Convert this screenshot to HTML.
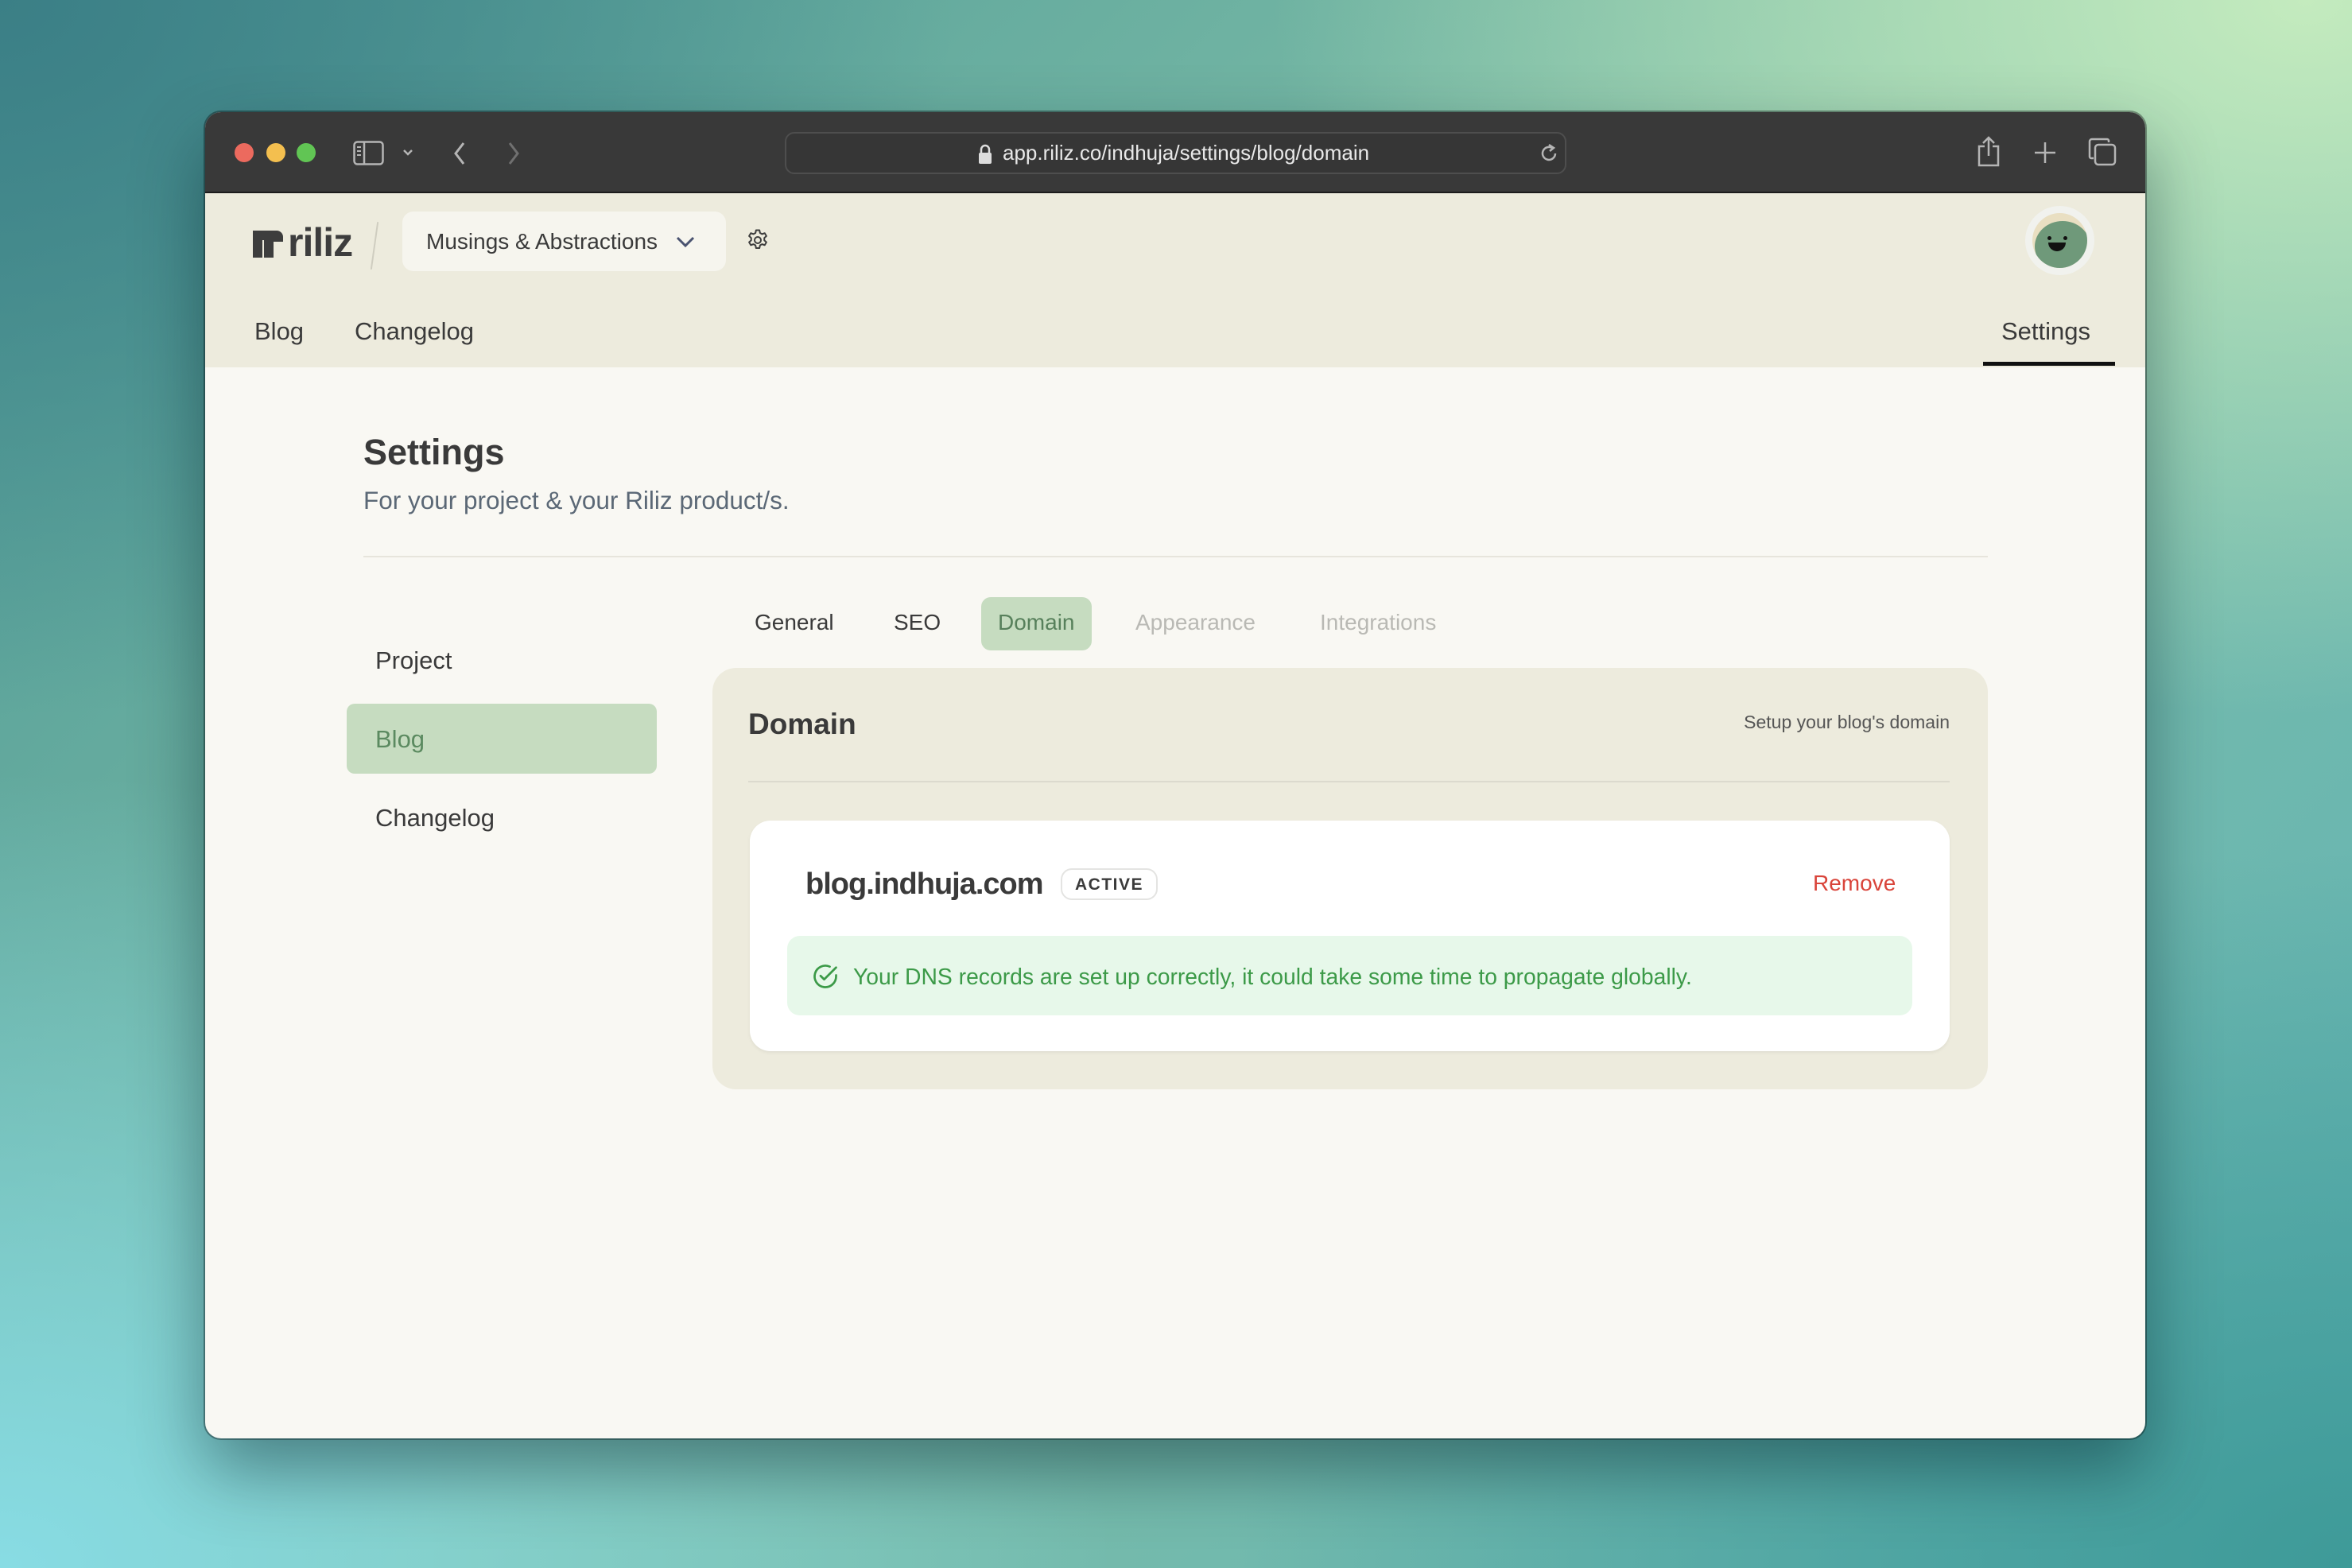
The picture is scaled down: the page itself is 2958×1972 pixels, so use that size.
<!DOCTYPE html>
<html><head><meta charset="utf-8"><style>
*{margin:0;padding:0;box-sizing:border-box}
html,body{width:2958px;height:1972px;overflow:hidden}
body{font-family:"Liberation Sans",sans-serif;position:relative;
background:
radial-gradient(ellipse 1300px 900px at 2900px 0px,#c4ebbe 0%,rgba(180,225,175,0) 100%),
radial-gradient(ellipse 1400px 1000px at 0px 1972px,#88dce4 0%,rgba(136,220,228,0) 100%),
radial-gradient(ellipse 1400px 900px at 2958px 1972px,#3e9a98 0%,rgba(62,154,152,0) 100%),
radial-gradient(ellipse 1200px 900px at 0px 0px,#3b7f86 0%,rgba(59,127,134,0) 100%),
linear-gradient(135deg,#4f9a96 0%,#7fbfa8 50%,#60b2b4 100%);}
.abs{position:absolute}
.win{left:258px;top:141px;width:2440px;height:1668px;border-radius:20px;overflow:hidden;background:#f9f8f3;box-shadow:0 40px 90px rgba(0,30,40,.45),0 0 0 2px rgba(0,0,0,.35)}
.tb{left:0;top:0;width:2440px;height:102px;background:#393939;border-bottom:2px solid #1c1c1c}
.dot{width:24px;height:24px;border-radius:50%;top:39px}
.hdr{left:0;top:102px;width:2440px;height:219px;background:#edebdd}
.t{position:absolute;white-space:nowrap;line-height:1}
</style></head><body>
<div class="abs win">
 <div class="abs tb">
  <div class="abs dot" style="left:37px;background:#ec6a5e"></div>
  <div class="abs dot" style="left:77px;background:#f4bf4f"></div>
  <div class="abs dot" style="left:115px;background:#61c554"></div>
  <svg class="abs" style="left:186px;top:36px" width="40" height="32" viewBox="0 0 40 32"><rect x="1.5" y="1.5" width="36" height="28" rx="4" fill="none" stroke="#b5b5b5" stroke-width="2.5"/><line x1="14" y1="2" x2="14" y2="30" stroke="#b5b5b5" stroke-width="2.5"/><path d="M5 8h5M5 13h5M5 18h5" stroke="#b5b5b5" stroke-width="2"/></svg>
  <svg class="abs" style="left:247px;top:44px" width="16" height="14" viewBox="0 0 16 14"><path d="M3 4l5 5 5-5" fill="none" stroke="#b5b5b5" stroke-width="2.5"/></svg>
  <svg class="abs" style="left:310px;top:36px" width="20" height="32" viewBox="0 0 20 32"><path d="M15 3L5 16l10 13" fill="none" stroke="#b5b5b5" stroke-width="3"/></svg>
  <svg class="abs" style="left:378px;top:36px" width="20" height="32" viewBox="0 0 20 32"><path d="M5 3l10 13L5 29" fill="none" stroke="#707070" stroke-width="3"/></svg>
  <div class="abs" style="left:729px;top:25px;width:983px;height:53px;border:2px solid #4e4e4e;border-radius:12px;background:#363636"></div>
  <svg class="abs" style="left:972px;top:40px" width="18" height="26" viewBox="0 0 18 26"><path d="M4 11V7a5 5 0 0110 0v4" fill="none" stroke="#ddd" stroke-width="2.5"/><rect x="1" y="11" width="16" height="14" rx="2" fill="#ddd"/></svg>
  <div class="t" style="left:1003px;top:38px;font-size:26px;color:#e8e8e8">app.riliz.co/indhuja/settings/blog/domain</div>
  <svg class="abs" style="left:1676px;top:38px" width="28" height="28" viewBox="0 0 28 28"><path d="M22 14a8 8 0 11-3-6.3" fill="none" stroke="#b5b5b5" stroke-width="2.5"/><path d="M14 3l6 4-5 4" fill="none" stroke="#b5b5b5" stroke-width="2.5"/></svg>
  <svg class="abs" style="left:2227px;top:29px" width="32" height="40" viewBox="0 0 32 40"><path d="M11 14H4v24h24V14h-7M16 26V3M9 10l7-7 7 7" fill="none" stroke="#b5b5b5" stroke-width="2.5"/></svg>
  <svg class="abs" style="left:2299px;top:36px" width="30" height="30" viewBox="0 0 30 30"><path d="M15 2v26M2 15h26" stroke="#b5b5b5" stroke-width="2.5"/></svg>
  <svg class="abs" style="left:2368px;top:32px" width="36" height="36" viewBox="0 0 36 36"><rect x="9" y="9" width="25" height="25" rx="4" fill="none" stroke="#b5b5b5" stroke-width="2.5"/><path d="M26 6V4a2 2 0 00-2-2H5a3 3 0 00-3 3v19a2 2 0 002 2h3" fill="none" stroke="#b5b5b5" stroke-width="2.5"/></svg>
 </div>
 <div class="abs hdr">
  <svg class="abs" style="left:60px;top:45px" width="40" height="38" viewBox="0 0 40 38"><path d="M0 2h30a8 8 0 018 8v6H26v20H14V14H12v22H0z" fill="#3d3d3d"/></svg>
  <div class="t" style="left:104px;top:37px;font-size:50px;font-weight:bold;color:#3d3d3d;letter-spacing:-1px">riliz</div>
  <div class="abs" style="left:212px;top:36px;width:2px;height:60px;background:#cfcdc0;transform:rotate(8deg)"></div>
  <div class="abs" style="left:248px;top:23px;width:407px;height:75px;background:#f6f5ee;border-radius:14px"></div>
  <div class="t" style="left:278px;top:47px;font-size:28px;color:#3a3a3a">Musings &amp; Abstractions</div>
  <svg class="abs" style="left:590px;top:50px" width="28" height="24" viewBox="0 0 28 24"><path d="M4 6l10 10 10-10" fill="none" stroke="#4a5370" stroke-width="3"/></svg>
  <svg class="abs" style="left:680px;top:43px" width="30" height="32" viewBox="0 0 24 24"><path d="M10.3 2h3.4l.6 2.8 2 1.1 2.7-.9 1.7 2.9-2.1 1.9v2.4l2.1 1.9-1.7 2.9-2.7-.9-2 1.1-.6 2.8h-3.4l-.6-2.8-2-1.1-2.7.9-1.7-2.9 2.1-1.9V9.8L3.3 7.9 5 5l2.7.9 2-1.1z" fill="none" stroke="#3d3d3d" stroke-width="1.6" stroke-linejoin="round"/><circle cx="12" cy="12" r="3.2" fill="none" stroke="#3d3d3d" stroke-width="1.6"/></svg>
  <div class="abs" style="left:2289px;top:16px;width:87px;height:87px;border-radius:50%;background:#f1f2ee"></div>
  <div class="abs" style="left:2298px;top:25px;width:69px;height:69px;border-radius:50%;background:#e9dfc2;overflow:hidden"><div class="abs" style="left:3px;top:10px;width:70px;height:64px;border-radius:50%;background:#6f997a"></div></div>
  <div class="abs" style="left:2317px;top:54px;width:5px;height:5px;border-radius:50%;background:#111"></div>
  <div class="abs" style="left:2337px;top:54px;width:5px;height:5px;border-radius:50%;background:#111"></div>
  <div class="abs" style="left:2318px;top:62px;width:22px;height:11px;border-radius:0 0 11px 11px;background:#111"></div>
  <div class="t" style="left:62px;top:158px;font-size:31px;color:#3a3a3a">Blog</div>
  <div class="t" style="left:188px;top:158px;font-size:31px;color:#3a3a3a">Changelog</div>
  <div class="t" style="left:2259px;top:158px;font-size:31px;color:#3a3a3a">Settings</div>
  <div class="abs" style="left:2236px;top:212px;width:166px;height:5px;background:#111"></div>
 </div>
 <div class="t" style="left:199px;top:405px;font-size:45px;font-weight:bold;color:#3a3a3a">Settings</div>
 <div class="t" style="left:199px;top:473px;font-size:31.5px;color:#5b6876">For your project &amp; your Riliz product/s.</div>
 <div class="abs" style="left:199px;top:558px;width:2043px;height:2px;background:#e7e5dc"></div>
 <div class="t" style="left:214px;top:674px;font-size:31px;color:#3a3a3a">Project</div>
 <div class="abs" style="left:178px;top:744px;width:390px;height:88px;border-radius:10px;background:#c6dcc0"></div>
 <div class="t" style="left:214px;top:773px;font-size:31px;color:#5b8a60">Blog</div>
 <div class="t" style="left:214px;top:872px;font-size:31px;color:#3a3a3a">Changelog</div>
 <div class="t" style="left:691px;top:628px;font-size:28px;color:#3a3a3a">General</div>
 <div class="t" style="left:866px;top:628px;font-size:28px;color:#3a3a3a">SEO</div>
 <div class="abs" style="left:976px;top:610px;width:139px;height:67px;border-radius:12px;background:#c6dcc0"></div>
 <div class="t" style="left:997px;top:628px;font-size:28px;color:#57805b">Domain</div>
 <div class="t" style="left:1170px;top:628px;font-size:28px;color:#b9b9b4">Appearance</div>
 <div class="t" style="left:1402px;top:628px;font-size:28px;color:#b9b9b4">Integrations</div>
 <div class="abs" style="left:638px;top:699px;width:1604px;height:530px;border-radius:30px;background:#edebdd"></div>
 <div class="t" style="left:683px;top:751px;font-size:37px;font-weight:bold;color:#3a3a3a">Domain</div>
 <div class="t" style="left:1918px;top:756px;font-size:23px;color:#555;width:276px;text-align:right">Setup your blog's domain</div>
 <div class="abs" style="left:683px;top:841px;width:1511px;height:2px;background:#dcdace"></div>
 <div class="abs" style="left:685px;top:891px;width:1509px;height:290px;border-radius:26px;background:#fff;box-shadow:0 2px 4px rgba(0,0,0,.06)"></div>
 <div class="t" style="left:755px;top:952px;font-size:38px;font-weight:bold;color:#3a3a3a;letter-spacing:-1px">blog.indhuja.com</div>
 <div class="abs" style="left:1076px;top:951px;width:122px;height:40px;border:2px solid #e4e4e2;border-radius:14px"></div>
 <div class="t" style="left:1076px;top:961px;width:122px;text-align:center;font-size:21px;font-weight:bold;color:#3a3a3a;letter-spacing:1.5px">ACTIVE</div>
 <div class="t" style="left:2022px;top:956px;width:103px;text-align:right;font-size:28px;color:#d9443a">Remove</div>
 <div class="abs" style="left:732px;top:1036px;width:1415px;height:100px;border-radius:16px;background:#e7f8ea"></div>
 <svg class="abs" style="left:762px;top:1069px" width="36" height="36" viewBox="0 0 24 24"><path d="M21 11v1a9 9 0 11-5.3-8.2" fill="none" stroke="#3c9a48" stroke-width="1.8" stroke-linecap="round"/><path d="M8 11.5l3 3 10-10" fill="none" stroke="#3c9a48" stroke-width="1.8" stroke-linecap="round" stroke-linejoin="round"/></svg>
 <div class="t" style="left:815px;top:1073px;font-size:28.3px;color:#3c9a48">Your DNS records are set up correctly, it could take some time to propagate globally.</div>
</div>
</body></html>
